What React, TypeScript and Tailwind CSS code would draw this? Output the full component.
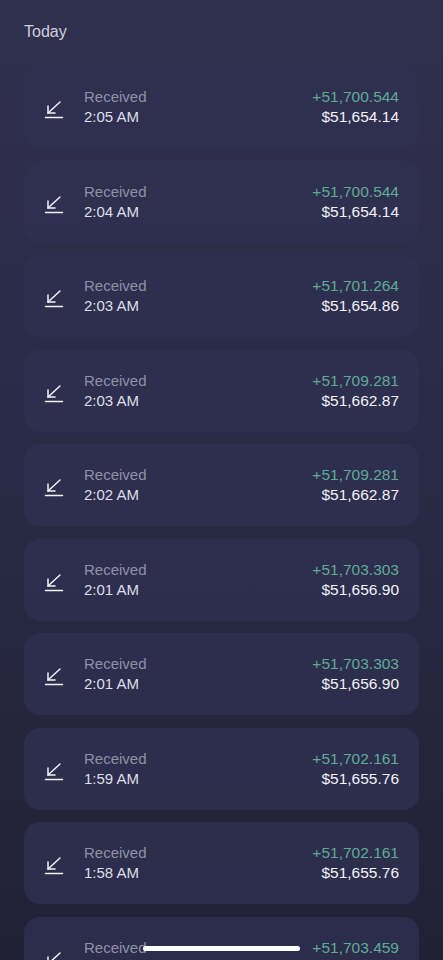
const rows = [
  { time: '2:05 AM', amount: '+51,700.544', usd: '$51,654.14' },
  { time: '2:04 AM', amount: '+51,700.544', usd: '$51,654.14' },
  { time: '2:03 AM', amount: '+51,701.264', usd: '$51,654.86' },
  { time: '2:03 AM', amount: '+51,709.281', usd: '$51,662.87' },
  { time: '2:02 AM', amount: '+51,709.281', usd: '$51,662.87' },
  { time: '2:01 AM', amount: '+51,703.303', usd: '$51,656.90' },
  { time: '2:01 AM', amount: '+51,703.303', usd: '$51,656.90' },
  { time: '1:59 AM', amount: '+51,702.161', usd: '$51,655.76' },
  { time: '1:58 AM', amount: '+51,702.161', usd: '$51,655.76' },
  { time: '1:57 AM', amount: '+51,703.459', usd: '$51,657.05' },
];

function ReceiveIcon() {
  return (
    <svg width="20" height="22" viewBox="0 0 20 22" fill="none" stroke="#f2f2f7" strokeWidth="1.5" strokeLinecap="round">
      <path d="M16 4 L4 15" />
      <path d="M4 8 V15 H11" />
      <path d="M1.5 19.5 H18.5" />
    </svg>
  );
}

export default function App() {
  return (
    <div
      className="relative h-[960px] w-full overflow-hidden bg-gradient-to-b from-[#30304f] via-[#292a45] to-[#212136] font-['Liberation_Sans',Arial,sans-serif]"
    >
      <div className="px-6 pt-5">
        <h2 className="text-[16px] leading-6 text-[#cfd0dc]">Today</h2>
        <div className="mt-[22px] flex flex-col gap-[12.5px]">
          {rows.map((r, i) => (
            <div
              key={i}
              className="flex h-[82px] shrink-0 items-center rounded-2xl bg-[#2f3051]/80 pl-5 pr-5"
            >
              <div className="flex w-5 shrink-0 justify-center pt-1">
                <ReceiveIcon />
              </div>
              <div className="ml-5 flex flex-col text-[15px] leading-5">
                <span className="text-[#8f91a7]">Received</span>
                <span className="text-[#dedfe8]">{r.time}</span>
              </div>
              <div className="ml-auto flex flex-col items-end text-[15.5px] leading-5">
                <span className="text-[#5eac96]">{r.amount}</span>
                <span className="text-[#f2f2f7]">{r.usd}</span>
              </div>
            </div>
          ))}
        </div>
      </div>
      <div className="absolute bottom-[9px] left-[143px] h-[5px] w-[157px] rounded-full bg-white" />
    </div>
  );
}
